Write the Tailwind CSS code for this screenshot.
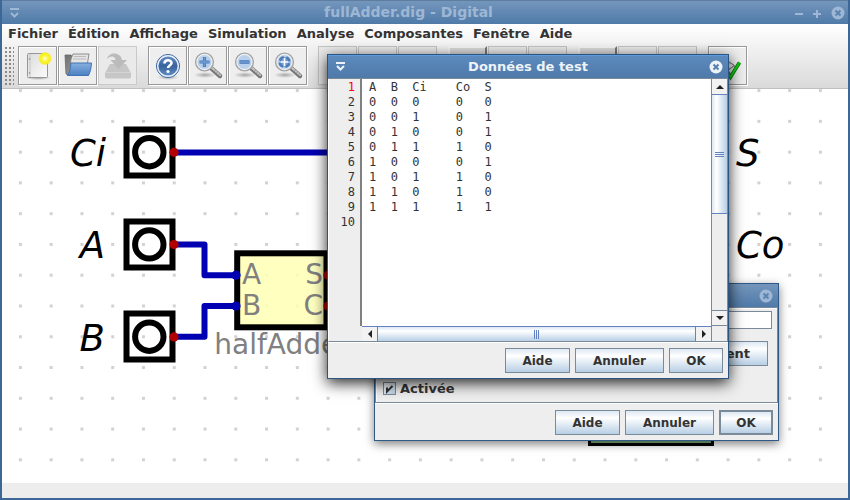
<!DOCTYPE html>
<html lang="fr">
<head>
<meta charset="utf-8">
<title>fullAdder.dig - Digital</title>
<script src="https://cdn.jsdelivr.net/npm/@tailwindcss/browser@4"></script>
</head>
<body class="relative flex h-screen flex-col overflow-hidden border-2 border-t-0 border-[#3d6796] bg-[#eeeeee] font-['DejaVu_Sans',sans-serif] text-[12px] font-bold text-[#333333]">

<svg class="absolute size-0" aria-hidden="true">
  <defs>
    <linearGradient id="paper" x1="0" y1="0" x2="1" y2="1"><stop offset="0" stop-color="#dcdcdc"/><stop offset="1" stop-color="#fbfbfb"/></linearGradient>
    <radialGradient id="glow"><stop offset="0" stop-color="#fffff0"/><stop offset=".4" stop-color="#fcf53c"/><stop offset=".75" stop-color="#f6ee1c"/><stop offset="1" stop-color="#f6ee1c" stop-opacity="0"/></radialGradient>
    <linearGradient id="folder" x1="0" y1="0" x2="0" y2="1"><stop offset="0" stop-color="#86b0e0"/><stop offset="1" stop-color="#4b80c2"/></linearGradient>
    <linearGradient id="back" x1="0" y1="0" x2="1" y2="1"><stop offset="0" stop-color="#707070"/><stop offset="1" stop-color="#a8a8a8"/></linearGradient>
    <linearGradient id="help" x1="0" y1="0" x2="0" y2="1"><stop offset="0" stop-color="#6d94c8"/><stop offset=".5" stop-color="#37629c"/><stop offset="1" stop-color="#6a94cb"/></linearGradient>
    <radialGradient id="shade"><stop offset="0" stop-color="#000" stop-opacity=".3"/><stop offset="1" stop-color="#000" stop-opacity="0"/></radialGradient>
    <symbol id="lens" viewBox="0 0 39 39">
      <ellipse cx="17" cy="29" rx="11" ry="3" fill="url(#shade)"/>
      <path d="M23 22l9 8" stroke="#757575" stroke-width="4.400" stroke-linecap="round"/>
      <path d="M24 22l8 7" stroke="#c4c4c4" stroke-width="2.200" stroke-linecap="round"/>
      <path d="M26 26l2-3M28 28l2-3M30 30l2-3" stroke="#858585" stroke-width=".8"/>
      <circle cx="16.500" cy="16" r="8.500" fill="#b9d1ed" stroke="#a3a3a3" stroke-width="2.200"/>
      <circle cx="16.500" cy="16" r="7.600" fill="none" stroke="#f2f2f2" stroke-width="1.200"/>
    </symbol>
    <pattern id="dots" width="30.770" height="30.770" patternUnits="userSpaceOnUse" x="5" y="75.200">
      <rect x="13.900" y="13.900" width="3" height="3" fill="#d2d2d2"/>
    </pattern>
  </defs>
</svg>

<header class="flex h-6 shrink-0 items-center border-t border-[#5f7d9f] bg-linear-to-b from-[#7496bc] to-[#4f7aa8] pr-px pl-1 text-[14px] text-[#9db7d4]">
  <button aria-label="Menu de la fenêtre"><svg class="ml-1 h-4 w-4" viewBox="0 0 16 16"><path d="M0 4h9" stroke="currentColor" stroke-width="2"/><path d="M1 8l3.500 3.500L8 8" fill="none" stroke="currentColor" stroke-width="2"/></svg></button>
  <h1 class="flex-1 text-center text-[14px]">fullAdder.dig - Digital</h1>
  <div class="flex items-center gap-1">
    <button aria-label="Réduire"><svg class="h-4 w-4" viewBox="0 0 16 16"><path d="M4 9h8" stroke="currentColor" stroke-width="2"/></svg></button>
    <button aria-label="Agrandir"><svg class="h-4 w-4" viewBox="0 0 16 16"><path d="M2 9h8M6 5v8" stroke="currentColor" stroke-width="2"/></svg></button>
    <button aria-label="Fermer"><svg class="h-4 w-4" viewBox="0 0 16 16"><circle cx="7" cy="8" r="6.500" fill="currentColor"/><path d="M4.500 5.500l5 5M9.500 5.500l-5 5" stroke="#5c84b0" stroke-width="2"/></svg></button>
  </div>
</header>

<div class="shrink-0 border-b border-[#bfbfbf] bg-linear-to-b from-white to-[#dadada] pb-[3px]">
  <nav class="flex h-[22px] items-center gap-[10px] px-[6px] pb-[2px] text-[13px]">
    <button>Fichier</button><button>Édition</button><button>Affichage</button><button>Simulation</button><button>Analyse</button><button>Composantes</button><button>Fenêtre</button><button>Aide</button>
  </nav>
  <div class="flex h-[39px] gap-px pl-[2px]">
    <div class="mr-[3px] w-[10px] bg-[radial-gradient(circle,#8a8a8a_1px,transparent_1px)] bg-[size:4px_4px]"></div>
    <button aria-label="Nouveau" class="size-[39px] border border-[#999] bg-[#eeeeee] shadow-[inset_1px_1px_#fff,1px_1px_#fff]">
      <svg viewBox="1 1 37 37"><ellipse cx="20" cy="32" rx="13" ry="2" fill="url(#shade)"/><rect x="9.500" y="7.500" width="20" height="24" rx="1" fill="url(#paper)" stroke="#969696"/><path d="M12 8v23" stroke="#c6c6c6"/><circle cx="11.500" cy="13" r=".8" fill="#888"/><circle cx="11.500" cy="27" r=".8" fill="#888"/><circle cx="27" cy="12.500" r="7" fill="url(#glow)"/></svg>
    </button>
    <button aria-label="Ouvrir" class="size-[39px] border border-[#999] bg-[#eeeeee] shadow-[inset_1px_1px_#fff,1px_1px_#fff]">
      <svg viewBox="1 1 37 37"><path d="M7 9h6l1.500 2H28v15l-18 3-2-1z" fill="url(#back)" stroke="#686868" stroke-width=".8"/><path d="M13 13l2-5h16l-2 12H12z" fill="#e4e4e4" stroke="#777" stroke-width=".8"/><path d="M16 10.500h12M15 13h13" stroke="#bbb"/><path d="M13 17h20.500c-.3 5-1.200 9-3 12.500H9.500c2-3 3-7 3.500-12.500z" fill="url(#folder)" stroke="#4173b2"/></svg>
    </button>
    <button aria-label="Enregistrer" disabled class="size-[39px] border border-[#c9c9c9] bg-[#eaeaea]">
      <svg viewBox="1 1 37 37"><path d="M7 27l5-9h16l5 9v4q0 1.500-2 1.500H9Q7 32 7 31z" fill="#c6c6c6"/><path d="M7.500 26.500h25" stroke="#d5d5d5"/><path d="M9 13c2-8 14-7 15 1h5l-8.500 9-8-9h5c0-4-5-5-8.500-1z" fill="#bbb"/></svg>
    </button>
    <button aria-label="Aide" class="ml-[10px] size-[39px] border border-[#999] bg-[#eeeeee] shadow-[inset_1px_1px_#fff,1px_1px_#fff]">
      <svg viewBox="1 1 37 37"><ellipse cx="20" cy="31" rx="11" ry="3" fill="url(#shade)"/><circle cx="20" cy="20" r="11.500" fill="url(#help)" stroke="#3a66a2"/><circle cx="20" cy="20" r="10.300" fill="none" stroke="#e8eff8" stroke-width="1.400"/><path d="M16.500 17.500c0-4.500 7-4 7-.5 0 2.500-3.500 2.500-3.500 5" fill="none" stroke="#fff" stroke-width="2.600"/><circle cx="20" cy="25.500" r="1.600" fill="#fff"/></svg>
    </button>
    <button aria-label="Agrandir la vue" class="size-[39px] border border-[#999] bg-[#eeeeee] shadow-[inset_1px_1px_#fff,1px_1px_#fff]">
      <svg viewBox="1 1 37 37"><use href="#lens" width="39" height="39"/><path d="M11.500 16h10M16.500 11v10" stroke="#4a7ab8" stroke-width="3.200"/><path d="M12 16h9M16.500 11.500v9" stroke="#6f9bd2" stroke-width="1.400"/></svg>
    </button>
    <button aria-label="Réduire la vue" class="size-[39px] border border-[#999] bg-[#eeeeee] shadow-[inset_1px_1px_#fff,1px_1px_#fff]">
      <svg viewBox="1 1 37 37"><use href="#lens" width="39" height="39"/><path d="M11.500 16h10" stroke="#4a7ab8" stroke-width="3.600"/><path d="M12 16h9" stroke="#6f9bd2" stroke-width="1.600"/></svg>
    </button>
    <button aria-label="Ajuster la vue" class="size-[39px] border border-[#999] bg-[#eeeeee] shadow-[inset_1px_1px_#fff,1px_1px_#fff]">
      <svg viewBox="1 1 37 37"><use href="#lens" width="39" height="39"/><circle cx="16.500" cy="16" r="5" fill="#6f9bd2" /><circle cx="16.500" cy="16" r="5" fill="none" stroke="#4a7ab8" stroke-width="2.200" stroke-dasharray="5.200 2.654" stroke-dashoffset="-1.327"/><path d="M16.500 12v8M12.500 16h8" stroke="#fff" stroke-width="1.600"/></svg>
    </button>
    <button aria-label="Annuler" disabled class="ml-[10px] size-[39px] border border-[#c4c4c4] bg-[#eaeaea]"></button>
    <button aria-label="Rétablir" disabled class="size-[39px] border border-[#c4c4c4] bg-[#eaeaea]"></button>
    <button aria-label="Supprimer" disabled class="size-[39px] border border-[#c4c4c4] bg-[#eaeaea]"></button>
    <button aria-label="Mode édition" class="ml-[10px] size-[39px] border-2 border-t-[#f6f6f6] border-r-[#777] border-b-[#777] border-l-[#f6f6f6] bg-[#dcdcdc]"></button>
    <button aria-label="Démarrer" disabled class="size-[39px] border border-[#c4c4c4] bg-[#eaeaea]"></button>
    <button aria-label="Pas à pas" disabled class="size-[39px] border border-[#c4c4c4] bg-[#eaeaea]"></button>
    <button aria-label="Arrêter" class="ml-[10px] size-[39px] border-2 border-t-[#f6f6f6] border-r-[#777] border-b-[#777] border-l-[#f6f6f6] bg-[#dcdcdc]"></button>
    <button aria-label="Avancer" disabled class="size-[39px] border border-[#c4c4c4] bg-[#eaeaea]"></button>
    <button aria-label="Continuer" disabled class="size-[39px] border border-[#c4c4c4] bg-[#eaeaea]"></button>
    <button aria-label="Lancer les tests" class="ml-[10px] size-[39px] border border-[#999] bg-[#eeeeee] shadow-[inset_1px_1px_#fff,1px_1px_#fff]">
      <svg viewBox="1 1 37 37"><path d="M16 14l10 5-6 6M20 15l7 5-8 4" fill="none" stroke="#888"/><path d="M17 22l5.500 9 9-14.500" fill="none" stroke="#067a06" stroke-width="3.600"/><path d="M17 22l5.500 9 9-14.500" fill="none" stroke="#11cf11" stroke-width="2"/></svg>
    </button>
  </div>
</div>

<main class="min-h-0 flex-1 bg-white">
  <svg class="h-full w-full" role="img" aria-label="Circuit" font-weight="400">
    <g transform="translate(-2 -89)">
      <rect x="0" y="89" width="100%" height="100%" fill="url(#dots)"/>
      <g fill="none" stroke="#0000b2" stroke-width="6" stroke-linejoin="round">
        <path d="M174 152.500H420"/><path d="M174 244.500H204.500V275.200H236"/><path d="M174 336.800H204.500V306H236"/>
      </g>
      <rect x="237.200" y="253.300" width="89.300" height="74" fill="#ffffb4" fill-opacity=".85" stroke="#000" stroke-width="6"/>
      <g fill="none" stroke="#000" stroke-width="6">
        <rect x="126.500" y="129.500" width="46" height="46"/><circle cx="149.300" cy="152.200" r="14.200"/>
        <rect x="126.500" y="221.500" width="46" height="46"/><circle cx="149.300" cy="244.400" r="14.200"/>
        <rect x="126.500" y="313.500" width="46" height="46"/><circle cx="149.300" cy="336.700" r="14.200"/>
      </g>
      <g fill="#b20000"><circle cx="174" cy="152.300" r="4.600"/><circle cx="174" cy="244.500" r="4.600"/><circle cx="174" cy="336.900" r="4.600"/><circle cx="328" cy="275.200" r="4.600"/><circle cx="328" cy="306" r="4.600"/></g>
      <g fill="#0000b2"><circle cx="236" cy="275.200" r="4.600"/><circle cx="236" cy="306" r="4.600"/></g>
      <rect x="589.500" y="300" width="123" height="144.500" fill="#7fb27f" stroke="#000" stroke-width="3"/>
      <g font-size="28" fill="#808080">
        <text x="242" y="284">A</text><text x="242" y="315">B</text><text x="323" y="284" text-anchor="end">S</text><text x="323" y="315" text-anchor="end">C</text>
        <text x="282" y="354" text-anchor="middle">halfAdder</text>
      </g>
      <g font-size="37" font-style="italic" fill="#000">
        <text x="106" y="166" text-anchor="end">Ci</text><text x="105" y="258" text-anchor="end">A</text><text x="105" y="351" text-anchor="end">B</text>
        <text x="736" y="166">S</text><text x="736" y="258">Co</text>
      </g>
    </g>
  </svg>
</main>
<footer class="h-[15px] shrink-0 bg-[#ededed]"></footer>

<!-- Properties dialog, behind -->
<section class="absolute top-[283px] left-[372px] flex h-[158px] w-[405px] flex-col border border-[#2f5a88] bg-[#eeeeee] shadow-[0_3px_9px_rgba(0,0,0,0.5)]">
  <div class="flex h-[23px] shrink-0 items-center justify-end bg-linear-to-b from-[#7496bc] to-[#4f7aa8] px-1 text-[#9db7d4]">
    <button aria-label="Fermer"><svg class="h-4 w-4" viewBox="0 0 16 16"><circle cx="8" cy="8" r="6.500" fill="currentColor"/><path d="M5.500 5.500l5 5M10.500 5.500l-5 5" stroke="#5c84b0" stroke-width="2"/></svg></button>
  </div>
  <div class="flex flex-1 flex-col border border-[#7a8a99] pt-[3px] pr-[5px] pl-[7px] shadow-[inset_1px_1px_#fff,0_1px_#fff]">
    <input aria-label="Étiquette" class="h-[18px] w-full border border-[#7a8a99] bg-white">
    <button class="mt-3 mr-1 h-[25px] w-[120px] self-end border border-[#7a8a99] bg-linear-to-b from-[#dde8f3] via-white via-30% to-[#b8cfe5] pr-[17px] text-right text-[13px]">ent</button>
    <label class="mt-[13px] flex items-center gap-1 text-[13px]">
      <span class="relative flex size-[13px]"><input type="checkbox" checked class="size-[13px] appearance-none border border-[#7a8a99] bg-linear-to-br from-white to-[#b8cfe5]"><svg class="pointer-events-none absolute inset-0" viewBox="0 0 13 13"><path d="M4 5.500v4L9.500 4" fill="none" stroke="#333" stroke-width="2"/></svg></span>
      Activée
    </label>
  </div>
  <div class="flex justify-end gap-[5px] px-[5px] py-[5px] pt-[7px]">
    <button class="h-[25px] w-[65px] border border-[#7a8a99] bg-linear-to-b from-[#dde8f3] via-white via-30% to-[#b8cfe5]">Aide</button>
    <button class="h-[25px] w-[89px] border border-[#7a8a99] bg-linear-to-b from-[#dde8f3] via-white via-30% to-[#b8cfe5]">Annuler</button>
    <button class="h-[25px] w-[54px] border-2 border-[#7a8a99] bg-linear-to-b from-[#dde8f3] via-white via-30% to-[#b8cfe5]">OK</button>
  </div>
</section>

<!-- Test data dialog, in front -->
<section class="absolute top-[54px] left-[325px] flex h-[325px] w-[402px] flex-col border border-[#2c5481] bg-[#eeeeee] shadow-[0_4px_14px_rgba(0,0,0,0.85)]">
  <div class="flex h-6 shrink-0 items-center border-t border-b border-t-[#5b9ade] border-b-[#7a8a99] bg-linear-to-b from-[#5c8abc] to-[#4f7aaa] px-1 text-[#eef3f9]">
    <button aria-label="Menu de la fenêtre" class="ml-1"><svg class="h-4 w-4" viewBox="0 0 16 16"><path d="M0 4h9" stroke="currentColor" stroke-width="2"/><path d="M1 7l3.500 3.500L8 7" fill="none" stroke="currentColor" stroke-width="2"/></svg></button>
    <h2 class="flex-1 pr-1 text-center text-[13px]">Données de test</h2>
    <button aria-label="Fermer"><svg class="h-4 w-4" viewBox="0 0 16 16"><circle cx="8" cy="8" r="6.500" fill="currentColor"/><path d="M5.500 5.500l5 5M10.500 5.500l-5 5" stroke="#5680b0" stroke-width="2"/></svg></button>
  </div>
  <div class="flex min-h-0 flex-1 border-x border-b border-[#7a8a99] border-l-white shadow-[0_1px_#fff]">
    <ol class="w-[31px] pt-px pr-[5px] text-right font-['DejaVu_Sans_Mono',monospace] text-[12px] leading-[15px] font-normal text-[#333]">
      <li class="text-[#ff0000]">1</li><li>2</li><li>3</li><li>4</li><li>5</li><li>6</li><li>7</li><li>8</li><li>9</li><li>10</li>
    </ol>
    <div class="flex min-w-0 flex-1 flex-col">
      <textarea aria-label="Données de test" spellcheck="false" wrap="off" class="min-h-0 w-full flex-1 resize-none overflow-hidden border-l-2 border-[#808080] bg-white pt-px pl-[7px] font-['DejaVu_Sans_Mono',monospace] text-[12px] leading-[15px] font-normal text-[#333]">A  B  Ci    Co  S
0  0  0     0   0
0  0  1     0   1
0  1  0     0   1
0  1  1     1   0
1  0  0     0   1
1  0  1     1   0
1  1  0     1   0
1  1  1     1   1
</textarea>
      <div class="ml-[2px] flex h-[15px] border-t border-[#6382bf]">
        <button aria-label="Défiler à gauche" class="flex w-[15px] items-center justify-center bg-[#f2f2f2]"><svg class="h-2 w-2" viewBox="0 0 8 8"><path d="M6 0v8L2 4z" fill="#222"/></svg></button>
        <div class="flex flex-1 items-center justify-center gap-px border-x border-[#6382bf] bg-linear-to-b from-[#dde8f3] via-white via-30% to-[#b8cfe5]"><i class="h-[9px] w-px bg-[#6382bf]"></i><i class="h-[9px] w-px bg-[#6382bf]"></i><i class="h-[9px] w-px bg-[#6382bf]"></i></div>
        <button aria-label="Défiler à droite" class="flex w-[15px] items-center justify-center bg-[#f2f2f2]"><svg class="h-2 w-2" viewBox="0 0 8 8"><path d="M2 0v8l4-4z" fill="#222"/></svg></button>
      </div>
    </div>
    <div class="flex w-4 flex-col border-l border-[#7a8a99]">
      <button aria-label="Défiler vers le haut" class="flex h-[15px] items-center justify-center bg-[#f2f2f2]"><svg class="h-2 w-2" viewBox="0 0 8 8"><path d="M0 6h8L4 2z" fill="#222"/></svg></button>
      <div class="flex h-[120px] flex-col items-center justify-center gap-px border-y border-[#6382bf] bg-linear-to-r from-[#dde8f3] via-white via-30% to-[#b8cfe5]"><i class="h-px w-[9px] bg-[#6382bf]"></i><i class="h-px w-[9px] bg-[#6382bf]"></i><i class="h-px w-[9px] bg-[#6382bf]"></i></div>
      <div class="flex-1"></div>
      <button aria-label="Défiler vers le bas" class="mb-[15px] flex h-4 items-center justify-center border-y border-[#7a8a99] bg-[#f2f2f2]"><svg class="h-2 w-2" viewBox="0 0 8 8"><path d="M0 2h8L4 6z" fill="#222"/></svg></button>
    </div>
  </div>
  <div class="flex justify-end gap-[5px] px-[5px] pt-[6px] pb-[5px]">
    <button class="h-[25px] w-[65px] border border-[#7a8a99] bg-linear-to-b from-[#dde8f3] via-white via-30% to-[#b8cfe5]">Aide</button>
    <button class="h-[25px] w-[89px] border border-[#7a8a99] bg-linear-to-b from-[#dde8f3] via-white via-30% to-[#b8cfe5]">Annuler</button>
    <button class="h-[25px] w-[54px] border border-[#7a8a99] bg-linear-to-b from-[#dde8f3] via-white via-30% to-[#b8cfe5]">OK</button>
  </div>
</section>
</body>
</html>
